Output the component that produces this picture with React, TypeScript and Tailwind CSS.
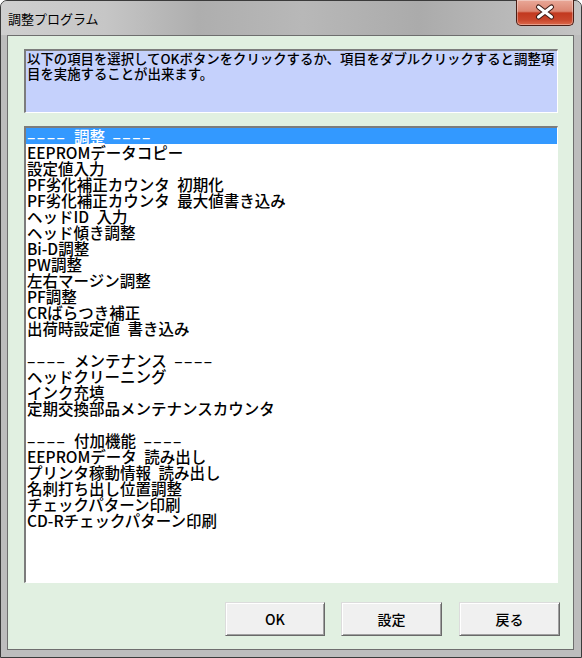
import React from 'react'

const items: { text: string; heading?: boolean }[] = [
    { text: '調整', heading: true },
    { text: 'EEPROMデータコピー' },
    { text: '設定値入力' },
    { text: 'PF劣化補正カウンタ 初期化' },
    { text: 'PF劣化補正カウンタ 最大値書き込み' },
    { text: 'ヘッドID 入力' },
    { text: 'ヘッド傾き調整' },
    { text: 'Bi-D調整' },
    { text: 'PW調整' },
    { text: '左右マージン調整' },
    { text: 'PF調整' },
    { text: 'CRばらつき補正' },
    { text: '出荷時設定値 書き込み' },
    { text: '' },
    { text: 'メンテナンス', heading: true },
    { text: 'ヘッドクリーニング' },
    { text: 'インク充填' },
    { text: '定期交換部品メンテナンスカウンタ' },
    { text: '' },
    { text: '付加機能', heading: true },
    { text: 'EEPROMデータ 読み出し' },
    { text: 'プリンタ稼動情報 読み出し' },
    { text: '名刺打ち出し位置調整' },
    { text: 'チェックパターン印刷' },
    { text: 'CD-Rチェックパターン印刷' },
]

function CloseButton() {
    return (
        <div className="-mt-[1px] ml-auto mr-[7px] h-[26px] w-[58px] rounded-b-[5px] border border-t-0 border-[#4a1d14] bg-[linear-gradient(180deg,#e9a898_0%,#dc8672_45%,#c2391f_52%,#c9472c_80%,#dc6a4c_100%)] shadow-[inset_0_0_0_1px_rgba(255,255,255,0.35)]">
            <svg width="56" height="25" viewBox="0 0 56 25">
                <path d="M21.5 7 L34.5 17 M34.5 7 L21.5 17" stroke="#3a1a14" strokeWidth="5" strokeLinecap="round" />
                <path d="M21.5 7 L34.5 17 M34.5 7 L21.5 17" stroke="#ffffff" strokeWidth="3" strokeLinecap="round" />
            </svg>
        </div>
    )
}

function DialogButton({ label, className }: { label: string; className?: string }) {
    return (
        <button
            type="button"
            className={`h-[34px] border border-[#dcdcdc] border-b-[#696969] border-r-[#696969] bg-[#f0f0f0] text-[14px] font-medium leading-none text-black shadow-[inset_1px_1px_0_#ffffff,inset_-1px_-1px_0_#a0a0a0] ${className ?? ''}`}
        >
            {label}
        </button>
    )
}

function Dashes() {
    return <span className="tracking-[1.5px]">––––</span>
}

export default function App() {
    return (
        <div className="h-[658px] w-[582px] font-['Noto_Sans_CJK_JP',sans-serif]">
            <div className="flex h-full flex-col rounded-t-[7px] border border-[#3b3b3b] bg-[#bdbdbd]">
                {/* Title bar */}
                <div className="flex h-[34px] items-start rounded-t-[6px] bg-[linear-gradient(90deg,#cfcfcf_0%,#c6c6c6_18%,#aeaeae_34%,#b8b8b8_52%,#ababab_72%,#c4c4c4_100%)]">
                    <span className="pl-[7px] pt-[9px] text-[13px] leading-[18px] text-black">調整プログラム</span>
                    <CloseButton />
                </div>

                {/* Client area */}
                <div className="ml-[6px] flex h-[615px] w-[567px] flex-col border border-[#6e6e6e] bg-[#e1f0e1]">
                    {/* Description */}
                    <div className="ml-[16px] mt-[13px] h-[64px] w-[534px] overflow-hidden whitespace-nowrap border-b border-l-2 border-r border-t-2 border-b-white border-l-[#7c7c7c] border-r-white border-t-[#7c7c7c] bg-[#c5d1fc] pl-[1px] text-[13.4px] font-medium leading-[15px] text-black">
                        以下の項目を選択してOKボタンをクリックするか、項目をダブルクリックすると調整項
                        <br />
                        目を実施することが出来ます。
                    </div>

                    {/* List */}
                    <div className="ml-[16px] mt-[13px] h-[457px] w-[534px] overflow-hidden border-b border-l-2 border-r border-t-2 border-b-white border-l-[#7c7c7c] border-r-white border-t-[#7c7c7c] bg-white text-[15.5px] font-medium leading-[16px] text-black [word-spacing:4px]">
                        {items.map((item, i) => (
                            <div
                                key={i}
                                className={`h-[16px] whitespace-nowrap pl-[1px] ${i === 0 ? 'bg-[#3399ff] text-white' : ''}`}
                            >
                                {item.heading ? (
                                    <>
                                        <Dashes /> {item.text} <Dashes />
                                    </>
                                ) : (
                                    item.text
                                )}
                            </div>
                        ))}
                    </div>

                    {/* Buttons */}
                    <div className="ml-[217px] mt-[19px] flex">
                        <DialogButton label="OK" className="w-[100px]" />
                        <DialogButton label="設定" className="ml-[16px] w-[101px]" />
                        <DialogButton label="戻る" className="ml-[17px] w-[101px]" />
                    </div>
                </div>
            </div>
        </div>
    )
}
